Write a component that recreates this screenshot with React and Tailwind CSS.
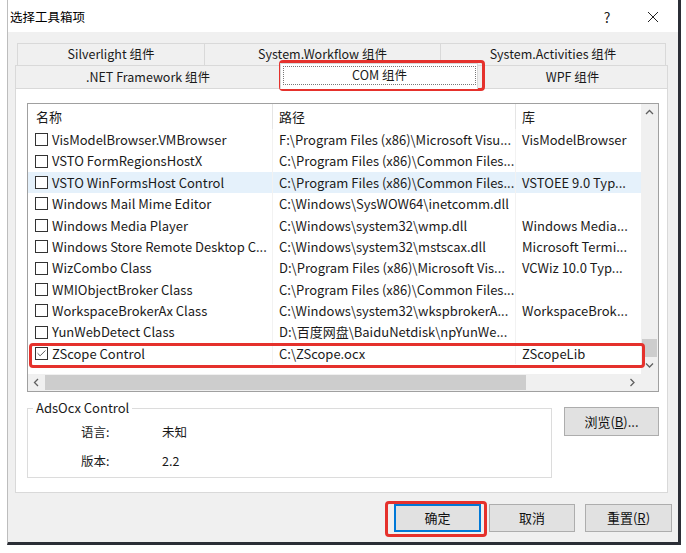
import { Check } from "lucide-react";

const rows = [
  ["VisModelBrowser.VMBrowser", "F:\\Program Files (x86)\\Microsoft Visu...", "VisModelBrowser"],
  ["VSTO FormRegionsHostX", "C:\\Program Files (x86)\\Common Files...", ""],
  ["VSTO WinFormsHost Control", "C:\\Program Files (x86)\\Common Files...", "VSTOEE 9.0 Typ...", "hover"],
  ["Windows Mail Mime Editor", "C:\\Windows\\SysWOW64\\inetcomm.dll", ""],
  ["Windows Media Player", "C:\\Windows\\system32\\wmp.dll", "Windows Media..."],
  ["Windows Store Remote Desktop C...", "C:\\Windows\\system32\\mstscax.dll", "Microsoft Termi..."],
  ["WizCombo Class", "D:\\Program Files (x86)\\Microsoft Vis...", "VCWiz 10.0 Typ..."],
  ["WMIObjectBroker Class", "C:\\Program Files (x86)\\Common Files...", ""],
  ["WorkspaceBrokerAx Class", "C:\\Windows\\system32\\wkspbrokerA...", "WorkspaceBrok..."],
  ["YunWebDetect Class", "D:\\百度网盘\\BaiduNetdisk\\npYunWe...", ""],
  ["ZScope Control", "C:\\ZScope.ocx", "ZScopeLib", "checked"],
];

function Chevron({ dir }) {
  const d = {
    up: "M1 5 L4.5 1.5 L8 5",
    down: "M1 1.5 L4.5 5 L8 1.5",
    left: "M5 1 L1.5 4.5 L5 8",
    right: "M1.5 1 L5 4.5 L1.5 8",
  }[dir];
  const vertical = dir === "up" || dir === "down";
  return (
    <svg width={vertical ? 9 : 7} height={vertical ? 7 : 9} viewBox={vertical ? "0 0 9 7" : "0 0 7 9"}>
      <path d={d} fill="none" stroke="#606060" strokeWidth="1.3" />
    </svg>
  );
}

function Checkbox({ checked }) {
  return (
    <div className="w-[13px] h-[13px] border border-[#333] bg-white flex items-center justify-center shrink-0">
      {checked && <Check size={11} strokeWidth={1.6} color="#222" />}
    </div>
  );
}

function Btn({ children, className = "" }) {
  return (
    <button className={`h-[28px] bg-[#e1e1e1] border border-[#adadad] text-[13px] text-[#111] flex items-center justify-center ${className}`}>
      {children}
    </button>
  );
}

export default function App() {
  return (
    <div className="relative w-[686px] h-[553px] bg-white overflow-hidden font-['Noto_Sans_CJK_SC','Noto_Sans',sans-serif] text-[#1a1a1a]">
      <div className="ml-[7px] w-[674px] h-[545px] flex flex-col border-l border-l-[#bdbdbd] border-r-[3px] border-r-[#2b2e36] border-b-[3px] border-b-[#2b2e36]">
        {/* title bar */}
        <div className="h-[32px] bg-white flex items-center justify-between pt-[2px]">
          <span className="pl-[2px] text-[12.5px] text-black">选择工具箱项</span>
          <div className="flex items-center mr-[2px]">
            <span className="w-[46px] text-center text-[14px] text-[#222]">?</span>
            <span className="w-[46px] flex justify-center">
              <svg width="12" height="12" viewBox="0 0 12 12">
                <path d="M1 1 L11 11 M11 1 L1 11" stroke="#222" strokeWidth="1" />
              </svg>
            </span>
          </div>
        </div>

        {/* body */}
        <div className="flex-1 bg-[#f0f0f0] pt-[11px] pl-[7px] pr-[10px] text-[12.5px]">
          {/* tabs row 1 */}
          <div className="flex h-[22px] mx-[2px]">
            <div className="w-[187px] border-t border-l border-[#d9d9d9] flex items-center justify-center">Silverlight 组件</div>
            <div className="w-[236px] border-t border-l border-[#d9d9d9] flex items-center justify-center">System.Workflow 组件</div>
            <div className="flex-1 border-t border-l border-r border-[#d9d9d9] flex items-center justify-center">System.Activities 组件</div>
          </div>
          {/* tabs row 2 */}
          <div className="flex h-[23px]">
            <div className="w-[265px] border-t border-l border-[#d9d9d9] flex items-center justify-center">.NET Framework 组件</div>
            <div className="relative z-10 w-[198px] -mt-[2px] -mb-px bg-white border-t border-l border-r border-[#d9d9d9] pt-[2px] pl-[2px] pr-[1px] pb-[4px] flex">
              <div className="flex-1 border border-dotted border-[#777] flex items-center justify-center">COM 组件</div>
            </div>
            <div className="flex-1 border-t border-r border-[#d9d9d9] flex items-center justify-center">WPF 组件</div>
          </div>

          {/* panel */}
          <div className="h-[405px] bg-white border border-[#d9d9d9] pt-[14px] pl-[11px]">
            {/* list view */}
            <div className="w-[632px] h-[289px] border border-[#a0a0a0] flex flex-col text-[13px]">
              <div className="flex-1 flex min-h-0">
                <div className="flex-1 flex flex-col">
                  <div className="h-[25px] flex items-center">
                    <div className="w-[244px] pl-[8px]">名称</div>
                    <div className="w-[243px] h-full border-l border-[#e5e5e5] pl-[6px] flex items-center">路径</div>
                    <div className="flex-1 h-full border-l border-[#e5e5e5] pl-[6px] flex items-center">库</div>
                  </div>
                  {rows.map(([name, path, lib, flag]) => (
                    <div key={name} className={`h-[21.4px] flex items-center whitespace-nowrap ${flag === "hover" ? "bg-[#e5f1fb]" : ""}`}>
                      <div className="w-[244px] pl-[7px] flex items-center gap-[4px] overflow-hidden">
                        <Checkbox checked={flag === "checked"} />
                        <span>{name}</span>
                      </div>
                      <div className="w-[243px] h-full border-l border-[#f2f2f2] pl-[6px] flex items-center overflow-hidden">{path}</div>
                      <div className="flex-1 h-full border-l border-[#f2f2f2] pl-[6px] flex items-center overflow-hidden">{lib}</div>
                    </div>
                  ))}
                </div>
                {/* vertical scrollbar */}
                <div className="w-[17px] bg-[#f0f0f0] flex flex-col">
                  <div className="h-[17px] flex items-center justify-center">
                    <Chevron dir="up" />
                  </div>
                  <div className="flex-1 flex flex-col justify-end px-[1px]">
                    <div className="h-[18px] bg-[#cdcdcd]" />
                  </div>
                  <div className="h-[17px] flex items-center justify-center">
                    <Chevron dir="down" />
                  </div>
                </div>
              </div>
              {/* horizontal scrollbar */}
              <div className="h-[17px] flex">
                <div className="flex-1 bg-[#f0f0f0] flex items-center">
                  <div className="w-[17px] flex justify-center">
                    <Chevron dir="left" />
                  </div>
                  <div className="w-[481px] h-[15px] bg-[#cdcdcd]" />
                  <div className="flex-1" />
                  <div className="w-[17px] flex justify-center">
                    <Chevron dir="right" />
                  </div>
                </div>
                <div className="w-[17px] bg-[#f0f0f0]" />
              </div>
            </div>

            {/* info + browse */}
            <div className="flex items-start">
              <div className="relative mt-[16px] w-[525px] h-[70px] border border-[#dcdcdc] pt-[13px] pl-[53px] text-[12.5px]">
                <span className="absolute left-[5px] -top-[10px] bg-white px-[3px] leading-[18px] text-[13px]">AdsOcx Control</span>
                <div className="flex h-[20px] items-center">
                  <span className="w-[81px]">语言:</span>
                  <span>未知</span>
                </div>
                <div className="flex h-[20px] items-center mt-[9px]">
                  <span className="w-[81px]">版本:</span>
                  <span>2.2</span>
                </div>
              </div>
              <Btn className="ml-[12px] mt-[15px] w-[95px] !h-[29px]">
                浏览(<span className="underline">B</span>)...
              </Btn>
            </div>
          </div>

          {/* dialog buttons */}
          <div className="flex justify-end mt-[11px] -mr-[4px]">
            <Btn className="w-[87px] !border-2 !border-[#0078d7]">确定</Btn>
            <Btn className="w-[86px] ml-[8px]">取消</Btn>
            <Btn className="w-[87px] ml-[10px]">
              重置(<span className="underline">R</span>)
            </Btn>
          </div>
        </div>
      </div>

      {/* red annotation boxes */}
      <div className="absolute left-[279px] top-[60px] w-[206px] h-[31px] border-[3px] border-[#e5312c] rounded-[4px]" />
      <div className="absolute left-[29px] top-[343px] w-[616px] h-[25px] border-[3px] border-[#e5312c] rounded-[4px]" />
      <div className="absolute left-[385px] top-[501px] w-[102px] h-[36px] border-[3px] border-[#e5312c] rounded-[4px]" />
    </div>
  );
}
